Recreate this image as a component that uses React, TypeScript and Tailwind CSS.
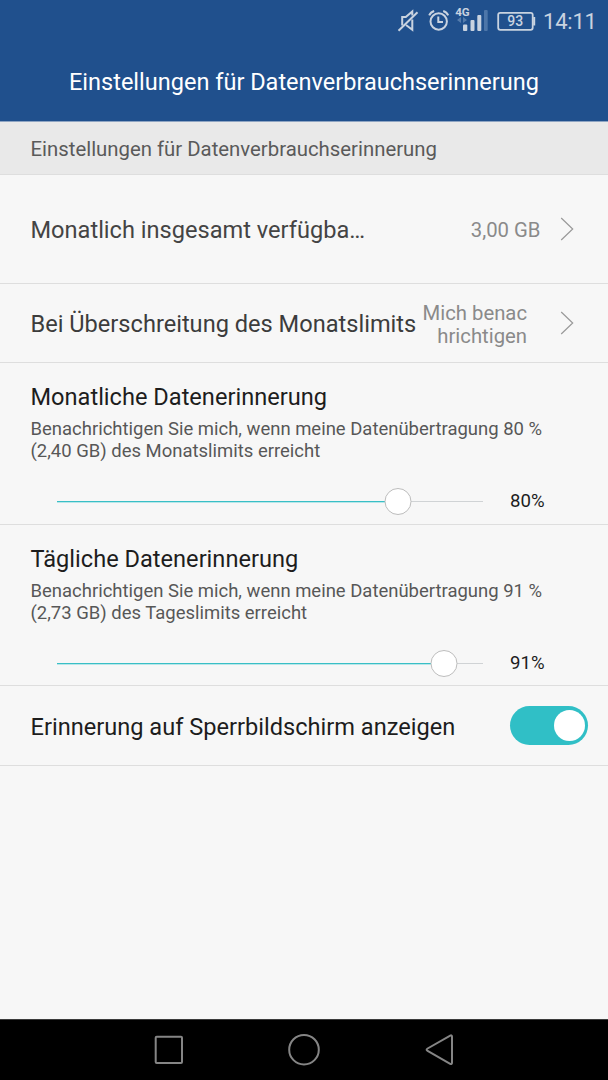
import type { ReactNode } from 'react';

function StatusBar() {
  return (
    <div className="flex h-[42px] items-center justify-end pr-[11px] text-[#c9d3e0]">
      <svg width="150" height="42" viewBox="0 0 150 42" fill="none" stroke="currentColor">
        <g strokeWidth="2">
          <path d="M12.200 25.500V17H15.800L22.300 11.500V15.500" />
          <path d="M22.300 19.500V29.800L16 25" />
          <path d="M8.500 30.800L27.500 12.300" />
        </g>
        <g strokeWidth="2">
          <circle cx="48.700" cy="21.500" r="8.200" />
          <path d="M48.300 16.500V22H53" />
          <path d="M39.200 15.400C40.200 13.100 41.700 11.700 44.200 11M58.200 15.400C57.200 13.100 55.700 11.700 53.200 11" />
        </g>
        <text x="65.200" y="15.600" fontFamily="Roboto, sans-serif" fontSize="11.500" fontWeight="700" fill="currentColor" stroke="none" textLength="14.5" lengthAdjust="spacingAndGlyphs">4G</text>
        <g stroke="none">
          <path d="M71 17V23L67 20ZM73 17V23L77 20Z" fill="#557cac" />
          <rect x="73" y="24.500" width="4.300" height="6.500" rx="1" fill="currentColor" />
          <rect x="80.500" y="20" width="4" height="11" rx="1" fill="currentColor" />
          <rect x="87.300" y="15" width="4" height="16" rx="1" fill="currentColor" />
          <rect x="94" y="10" width="3.700" height="21" rx="1" fill="#4d76a9" />
        </g>
        <rect x="108.200" y="12.800" width="34.500" height="17" rx="2" strokeWidth="1.800" />
        <path d="M144.200 17V25.500" strokeWidth="2" />
        <text x="125.200" y="26" textAnchor="middle" fontFamily="Roboto, sans-serif" fontSize="14" fontWeight="500" fill="currentColor" stroke="none">93</text>
      </svg>
      <span className="ml-[3px] w-[54px] whitespace-nowrap pt-px text-[22px] leading-[42px] tracking-[-0.200px]">14:11</span>
    </div>
  );
}

function Chevron() {
  return (
    <svg width="14" height="24" viewBox="0 0 14 24" fill="none" stroke="#999" strokeWidth="1.2" className="shrink-0">
      <path d="M1.200 1L12.700 12L1.200 23" />
    </svg>
  );
}

interface ReminderProps {
  title: string;
  children: ReactNode;
  value: number;
}

function Reminder({ title, children, value }: ReminderProps) {
  return (
    <section className="border-b border-[#dedede] pt-[19px]">
      <h2 className="pl-[30.500px] text-[23.600px] leading-[30px] text-[#1d1d1d]">{title}</h2>
      <p className="mt-[6px] whitespace-nowrap pl-[30.500px] text-[18.480px] leading-[22px] text-[#575757]">{children}</p>
      <div className="mt-[25px] flex h-[30px] items-center pl-[57px]">
        <div className="relative h-[2px] w-[426px]">
          <div className="flex h-px bg-[#d0d3d5]">
            <div className="h-[2px] border-b border-[#b9e7e9] bg-[#39bfc6]" style={{ width: `${value}%` }} />
          </div>
          <div
            className="absolute -top-[13px] size-[27px] -translate-x-1/2 rounded-full border border-[#bdbdbd] bg-white"
            style={{ left: `calc(${value}% - 0.3px)` }}
          />
        </div>
        <span className="ml-[27px] pb-[2px] text-[18.600px] leading-[30px] text-[#1d1d1d]">{value}%</span>
      </div>
    </section>
  );
}

export default function App() {
  return (
    <div className="flex h-[1080px] w-[608px] flex-col overflow-hidden bg-[#f7f7f7] font-['Roboto',sans-serif]">
      <header className="h-[122px] shrink-0 border-b border-[#8fa5c3] bg-[#20508d]">
        <StatusBar />
        <h1 className="mt-[25px] whitespace-nowrap pl-[69px] text-[23.520px] leading-[30px] text-white">
          Einstellungen für Datenverbrauchserinnerung
        </h1>
      </header>
      <main className="flex-1">
        <div className="flex h-[53px] items-center border-b border-[#dedede] bg-[#e9e9e9] pl-[30.500px] pt-[2px] text-[20.350px] text-[#5a5a5a]">
          Einstellungen für Datenverbrauchserinnerung
        </div>
        <div className="flex h-[109px] items-center border-b border-[#dedede] pl-[30.500px] pr-[34px]">
          <span className="flex-1 whitespace-nowrap pt-px text-[23.600px] leading-[36px] text-[#444]">Monatlich insgesamt verfügba…</span>
          <span className="mr-[19.500px] pt-[2px] text-[20.300px] text-[#8a8a8a]">3,00 GB</span>
          <Chevron />
        </div>
        <div className="flex h-[79px] items-center border-b border-[#dedede] pl-[30.500px] pr-[34px]">
          <span className="flex-1 whitespace-nowrap pt-[2px] text-[23.600px] leading-[36px] text-[#3c3c3c]">Bei Überschreitung des Monatslimits</span>
          <span className="mr-[33px] pt-[3px] text-right text-[20.300px] leading-[23px] text-[#8a8a8a]">
            Mich benac
            <br />
            hrichtigen
          </span>
          <Chevron />
        </div>
        <div className="*:first:h-[162px] *:last:h-[161px]">
          <Reminder title="Monatliche Datenerinnerung" value={80}>
            Benachrichtigen Sie mich, wenn meine Datenübertragung 80 %<br />
            (2,40 GB) des Monatslimits erreicht
          </Reminder>
          <Reminder title="Tägliche Datenerinnerung" value={91}>
            Benachrichtigen Sie mich, wenn meine Datenübertragung 91 %<br />
            (2,73 GB) des Tageslimits erreicht
          </Reminder>
        </div>
        <div className="flex h-[80px] items-center justify-between border-b border-[#dedede] pl-[30.500px] pr-[20px]">
          <span className="whitespace-nowrap pt-[2px] text-[23.600px] leading-[36px] text-[#1d1d1d]">Erinnerung auf Sperrbildschirm anzeigen</span>
          <div className="flex h-[39px] w-[78px] items-center justify-end rounded-full bg-[#30bfc6] pr-[3.500px]">
            <div className="size-[31px] rounded-full bg-white" />
          </div>
        </div>
      </main>
      <nav className="h-[61px] shrink-0 border-t border-[#3c3c3c] bg-black">
        <svg width="608" height="60" viewBox="0 0 608 60" fill="none" stroke="#858585" strokeWidth="2">
          <rect x="155.700" y="16.700" width="26.300" height="26.300" rx="1" />
          <circle cx="304" cy="29.700" r="14.800" />
          <path d="M450.200 15.600Q452 14.800 452 16.800V42.800Q452 44.700 450.200 43.800L427.600 30.900Q425.600 29.700 427.600 28.500Z" />
        </svg>
      </nav>
    </div>
  );
}
